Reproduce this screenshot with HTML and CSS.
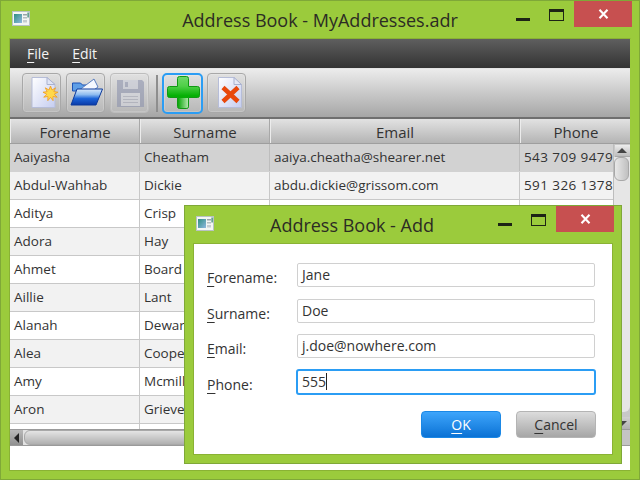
FILE: index.html
```html
<!DOCTYPE html>
<html lang="en">
<head>
<meta charset="utf-8">
<title>Address Book</title>
<link rel="stylesheet" href="styles.css">
</head>
<body>
<svg class="defs" width="0" height="0">
  <defs>
    <linearGradient id="winTile" x1="0" y1="0" x2="1" y2="1"><stop offset="0" stop-color="#2f8f80"/><stop offset="1" stop-color="#8fb8e0"/></linearGradient>
    <linearGradient id="pageG" x1="0" y1="0" x2="1" y2="1"><stop offset="0" stop-color="#ffffff"/><stop offset="1" stop-color="#c5cdf0"/></linearGradient>
    <linearGradient id="folderG" x1="0" y1="0" x2="0" y2="1"><stop offset="0" stop-color="#dcebfb"/><stop offset="0.35" stop-color="#8dbcf0"/><stop offset="0.6" stop-color="#1a63d8"/><stop offset="1" stop-color="#0a3aa8"/></linearGradient>
    <linearGradient id="plusG" x1="0" y1="0" x2="0" y2="1"><stop offset="0" stop-color="#6fd86a"/><stop offset="0.3" stop-color="#4fcf48"/><stop offset="0.6" stop-color="#05b005"/><stop offset="1" stop-color="#109a10"/></linearGradient>
    <linearGradient id="plusShine" x1="0" y1="0" x2="1" y2="0"><stop offset="0" stop-color="#0aa80a"/><stop offset="1" stop-color="#d8f5d0"/></linearGradient>
    <symbol id="winicon" viewBox="0 0 18 15">
      <rect x="0.5" y="0.5" width="17" height="14" fill="#f3f6f4" stroke="#b9c2c4"/>
      <rect x="2" y="3" width="8" height="9" fill="url(#winTile)"/>
      <rect x="11" y="3" width="4" height="1.5" fill="#9aa5aa"/>
      <rect x="11" y="6" width="4" height="1.5" fill="#b5bdc0"/>
      <rect x="11" y="9" width="4" height="2.5" fill="#c5ccd0"/>
      <rect x="15.5" y="1.5" width="1.2" height="5" fill="#2c7f6a"/>
    </symbol>
  </defs>
</svg>

<section class="window main-window">
  <header class="titlebar">
    <svg class="app-icon"><use href="#winicon"/></svg>
    <h1 class="title">Address Book - MyAddresses.adr</h1>
    <div class="win-controls">
      <span class="min"></span>
      <span class="max"></span>
      <span class="close"><svg width="11" height="10" viewBox="0 0 11 10"><path d="M1.500 .8 9.500 9.200 M9.500 .8 1.500 9.200" stroke="#fff" stroke-width="2.100" fill="none"/></svg></span>
    </div>
  </header>
  <div class="client">
    <nav class="menubar">
      <span class="menu"><u>F</u>ile</span>
      <span class="menu"><u>E</u>dit</span>
    </nav>
    <div class="toolbar">
      <button class="tool" type="button">
        <svg width="34" height="34" viewBox="0 0 34 34">
          <path d="M7 1.500H22L30 8.500V31.500H7Z" fill="url(#pageG)" stroke="#b6bdd8"/>
          <path d="M22 1.500V8.500H30Z" fill="#dfe4f5" stroke="#aab2cf"/>
          <path d="M25.500 10l1.500 4 3.500-2.200-1.700 3.800 4.100.6-3.700 2 3 3-4.200-.7.100 4.200-2.600-3.300-2.700 3.300.100-4.200-4.200.7 3-3-3.700-2 4.100-.6-1.800-3.800 3.600 2.200Z" fill="#ffd84a" stroke="#f09a20" stroke-width=".8"/>
        </svg>
      </button>
      <button class="tool" type="button">
        <svg width="34" height="34" viewBox="0 0 34 34">
          <path d="M3.500 7h8l2 2h8v6H3.500Z" fill="#5f9fe6" stroke="#1c52b5"/>
          <path d="M9 15 25 3l4 8-7 5Z" fill="#f5f8ff" stroke="#5b7fc0"/>
          <path d="M8 13h25.500l-6.500 16H2Z" fill="url(#folderG)" stroke="#0d3a9c"/>
        </svg>
      </button>
      <button class="tool tool-disabled" type="button">
        <svg width="34" height="34" viewBox="0 0 34 34">
          <path d="M4 4h25l2 2v25H4Z" fill="#8d93ad"/>
          <rect x="10" y="4" width="15" height="9" fill="#c9ccd8"/>
          <rect x="12" y="6" width="3" height="5" fill="#8d93ad"/>
          <rect x="8" y="17" width="19" height="13" fill="#d6d8e0"/>
          <path d="M10 20.500h15M10 23.500h15M10 26.500h15" stroke="#a8abba"/>
        </svg>
      </button>
      <span class="tool-sep"></span>
      <button class="tool tool-focus" type="button">
        <svg width="34" height="34" viewBox="0 0 34 34">
          <path d="M13.500 .5h7a2 2 0 0 1 2 2v8h9a2 2 0 0 1 2 2v7a2 2 0 0 1-2 2h-9v9a2 2 0 0 1-2 2h-7a2 2 0 0 1-2-2v-9h-8a2 2 0 0 1-2-2v-7a2 2 0 0 1 2-2h8v-8a2 2 0 0 1 2-2Z" fill="url(#plusG)" stroke="#0f9a12"/>
          <path d="M12 22h10v8.500a1.500 1.500 0 0 1-1.500 1.500h-7a1.500 1.500 0 0 1-1.500-1.500Z" fill="url(#plusShine)" opacity=".8"/>
        </svg>
      </button>
      <button class="tool" type="button">
        <svg width="34" height="34" viewBox="0 0 34 34">
          <path d="M8.500 1.500H24L31.500 8.500V31.500H8.500Z" fill="url(#pageG)" stroke="#b6bdd8"/>
          <path d="M24 1.500V8.500H31.500Z" fill="#e5e8f5" stroke="#aab2cf"/>
          <path d="M13 11.500 28 25.500M28 11.500 13 25.500" stroke="#e8480c" stroke-width="4.500" fill="none"/>
        </svg>
      </button>
    </div>
    <div class="table">
      <div class="thead">
        <div class="th col-a">Forename</div>
        <div class="th col-b">Surname</div>
        <div class="th col-c">Email</div>
        <div class="th col-d">Phone</div>
      </div>
      <div class="tbody">
        <div class="rows">
          <div class="row row-selected"><div class="td col-a">Aaiyasha</div><div class="td col-b">Cheatham</div><div class="td col-c">aaiya.cheatha@shearer.net</div><div class="td col-d">543 709 9479</div></div>
          <div class="row row-odd"><div class="td col-a">Abdul-Wahhab</div><div class="td col-b">Dickie</div><div class="td col-c">abdu.dickie@grissom.com</div><div class="td col-d">591 326 1378</div></div>
          <div class="row"><div class="td col-a">Aditya</div><div class="td col-b">Crisp</div><div class="td col-c"></div><div class="td col-d"></div></div>
          <div class="row row-odd"><div class="td col-a">Adora</div><div class="td col-b">Hay</div><div class="td col-c"></div><div class="td col-d"></div></div>
          <div class="row"><div class="td col-a">Ahmet</div><div class="td col-b">Board</div><div class="td col-c"></div><div class="td col-d"></div></div>
          <div class="row row-odd"><div class="td col-a">Aillie</div><div class="td col-b">Lant</div><div class="td col-c"></div><div class="td col-d"></div></div>
          <div class="row"><div class="td col-a">Alanah</div><div class="td col-b">Dewar</div><div class="td col-c"></div><div class="td col-d"></div></div>
          <div class="row row-odd"><div class="td col-a">Alea</div><div class="td col-b">Cooper</div><div class="td col-c"></div><div class="td col-d"></div></div>
          <div class="row"><div class="td col-a">Amy</div><div class="td col-b">Mcmillan</div><div class="td col-c"></div><div class="td col-d"></div></div>
          <div class="row row-odd"><div class="td col-a">Aron</div><div class="td col-b">Grieve</div><div class="td col-c"></div><div class="td col-d"></div></div>
          <div class="row row-last"><div class="td col-a"></div><div class="td col-b"></div><div class="td col-c"></div><div class="td col-d"></div></div>
        </div>
        <div class="vscroll">
          <span class="arrow-box"><span class="arrow-up"></span></span>
          <span class="vtrack"><span class="vthumb"></span></span>
          <span class="arrow-box arrow-box-down"><span class="arrow-down"></span></span>
        </div>
      </div>
      <div class="hscroll">
        <span class="arrow-box-h"><span class="arrow-left"></span></span>
        <span class="hthumb"></span>
        <span class="scroll-corner"></span>
      </div>
    </div>
  </div>
</section>

<section class="window dialog">
  <header class="titlebar dialog-titlebar">
    <svg class="app-icon"><use href="#winicon"/></svg>
    <h2 class="title dialog-title">Address Book - Add</h2>
    <div class="win-controls dialog-controls">
      <span class="min"></span>
      <span class="max"></span>
      <span class="close"><svg width="11" height="10" viewBox="0 0 11 10"><path d="M1.500 .8 9.500 9.200 M9.500 .8 1.500 9.200" stroke="#fff" stroke-width="2.100" fill="none"/></svg></span>
    </div>
  </header>
  <form class="dialog-client">
    <div class="form-grid">
      <label class="form-label"><u>F</u>orename:</label><div class="input">Jane</div>
      <label class="form-label"><u>S</u>urname:</label><div class="input">Doe</div>
      <label class="form-label"><u>E</u>mail:</label><div class="input">j.doe@nowhere.com</div>
      <label class="form-label"><u>P</u>hone:</label><div class="input input-focus">555<span class="caret"></span></div>
    </div>
    <div class="actions">
      <span class="btn btn-default"><u>O</u>K</span>
      <span class="btn btn-cancel"><u>C</u>ancel</span>
    </div>
  </form>
</section>
</body>
</html>
```

FILE: styles.css
```css
* { box-sizing: border-box; }
html, body { margin: 0; padding: 0; }
body {
  width: 640px;
  height: 480px;
  position: relative;
  overflow: hidden;
  background: #9bcb3c;
  font-family: "Open Sans", "Noto Sans", sans-serif;
  font-size: 14px;
  color: #333;
}
u { text-underline-offset: 3px; }
.defs { position: absolute; }
.window {
  position: absolute;
  display: flex;
  flex-direction: column;
  background: #9bcb3c;
  border: 1px solid #7fa838;
}
.main-window { left: 0; top: 0; width: 640px; height: 480px; padding: 0 8px 8px; }
.titlebar {
  height: 37px;
  flex: none;
  position: relative;
  display: flex;
  justify-content: center;
}
.app-icon { position: absolute; left: 3px; top: 10px; width: 18px; height: 15px; }
.title {
  margin: 0;
  font-weight: 400;
  font-size: 18px;
  line-height: 38px;
  color: #2c2c24;
}
.win-controls {
  position: absolute;
  right: -1px;
  top: 0;
  height: 26px;
  display: flex;
  align-items: flex-start;
}
.min { width: 14px; height: 3px; margin-top: 17px; margin-right: 19px; background: #1d2415; }
.max { width: 15px; height: 12px; margin-top: 8px; margin-right: 10px; border: 1px solid #1d2415; border-top-width: 3px; }
.close {
  width: 58px;
  height: 26px;
  background: #c75050;
  display: flex;
  align-items: center;
  justify-content: center;
  padding-bottom: 1px;
}
.client {
  flex: 1;
  display: flex;
  flex-direction: column;
  background: #fff;
  border: 1px solid #8ab234;
  border-right-color: #9bcb3c;
  min-height: 0;
}
.menubar {
  height: 30px;
  flex: none;
  display: flex;
  gap: 23px;
  padding: 0 17px;
  align-items: center;
  background: linear-gradient(#5f5f5f, #333);
  border-bottom: 1px solid #e4e4e4;
  color: #f4f4f4;
}
.menu { line-height: 28px; }
.toolbar {
  height: 50px;
  flex: none;
  display: flex;
  align-items: center;
  gap: 5px;
  padding: 0 12px;
  background: linear-gradient(#ececec, #a6a6a6);
  border-bottom: 2px solid #6f6f6f;
}
.tool {
  width: 39px;
  height: 40px;
  padding: 0;
  flex: none;
  display: flex;
  align-items: center;
  justify-content: center;
  border: 1px solid #a8a8a8;
  border-radius: 4px;
  background: linear-gradient(#e0e0e0, #b8b8b8);
  box-shadow: inset 0 0 0 1px rgba(255, 255, 255, .18);
}
.tool svg { flex: none; }
.tool-disabled { border-color: #bdbdbd; }
.tool-disabled svg { opacity: .6; }
.tool-focus {
  width: 41px;
  height: 41px;
  margin: 0 -1px;
  border: 2px solid #2b9df4;
  border-radius: 5px;
}
.tool-sep { width: 2px; height: 37px; background: #8e8e8e; margin-left: 2px; }
.table {
  flex: none;
  width: 100%;
  display: flex;
  flex-direction: column;
  height: 327px;
  overflow: hidden;
}
.thead {
  height: 25px;
  flex: none;
  display: flex;
  background: linear-gradient(#e2e2e2, #b4b4b4);
  border-bottom: 1px solid #9e9e9e;
}
.th {
  text-align: center;
  line-height: 26px;
  font-size: 15px;
  border-right: 1px solid #a8a8a8;
  border-left: 1px solid #ececec;
  color: #333;
}
.col-a { width: 130px; flex: none; }
.col-b { width: 130px; flex: none; }
.col-c { width: 250px; flex: none; }
.col-d { width: 112px; flex: none; }
.tbody { flex: 1; position: relative; display: flex; min-height: 0; overflow: hidden; }
.rows { flex: 1; overflow: hidden; }
.row { display: flex; height: 28px; background: #fff; border-bottom: 1px solid #c8c8c8; }
.row-odd { background: #f2f2f2; }
.row-selected { background: #d2d2d2; border-bottom-color: #d2d2d2; }
.td {
  padding-left: 4px;
  line-height: 27px;
  font-size: 13.5px;
  white-space: nowrap;
  overflow: hidden;
  border-right: 1px solid #c8c8c8;
}
.td.col-d { letter-spacing: .4px; }
.row-selected .td { border-right-color: #bdbdbd; }
.vscroll {
  position: absolute;
  right: 0;
  top: 0;
  bottom: 0;
  width: 17px;
  background: #c8c8c8;
  border-left: 1px solid #bdbdbd;
  display: flex;
  flex-direction: column;
  align-items: center;
  padding-top: 1px;
}
.arrow-box { width: 15px; height: 12px; flex: none; display: flex; align-items: center; justify-content: center; background: linear-gradient(#ececec, #bcbcbc); border-bottom: 1px solid #a8a8a8; }
.arrow-box-down { background: linear-gradient(#d0d0d0, #b0b0b0); border-bottom: 0; }
.arrow-up { width: 0; height: 0; border: 5px solid transparent; border-top: 0; border-bottom: 5px solid #444; }
.arrow-down { width: 0; height: 0; border: 5px solid transparent; border-bottom: 0; border-top: 5px solid #444; }
.vtrack { flex: 1; width: 100%; margin-bottom: 5px; background: #e6e6e6; border-radius: 0 0 6px 6px; }
.vthumb { display: block; width: 15px; height: 24px; border: 1px solid #a8a8a8; border-radius: 6px; background: linear-gradient(90deg, #e8e8e8, #c0c0c0); }
.hscroll {
  height: 17px;
  flex: none;
  display: flex;
  align-items: center;
  background: #e2e2e2;
  border-top: 1px solid #9a9a9a;
  border-bottom: 1px solid #9a9a9a;
}
.arrow-box-h { width: 13px; height: 15px; flex: none; display: flex; align-items: center; justify-content: center; background: linear-gradient(#b8b8b8, #909090); }
.arrow-left { width: 0; height: 0; border: 5px solid transparent; border-left: 0; border-right: 5px solid #222; }
.hthumb { flex: 1; height: 15px; margin-left: 1px; border: 1px solid #a8a8a8; border-radius: 6px; background: linear-gradient(#e4e4e4, #b0b0b0); }
.scroll-corner { width: 17px; height: 15px; flex: none; background: #c4c4c4; }

.dialog { left: 184px; top: 205px; width: 438px; height: 259px; padding: 0 8px 8px; }
.dialog-title { padding-right: 102px; }
.dialog-client {
  flex: 1;
  background: #fff;
  border: 1px solid #8ab234;
  padding: 19px 17px 0 13px;
  display: flex;
  flex-direction: column;
}
.form-grid {
  display: grid;
  grid-template-columns: 90px 1fr;
  row-gap: 11.67px;
}
.form-label { line-height: 24px; padding-top: 3px; font-size: 14px; color: #333; height: 24px; }
.input {
  height: 24px;
  line-height: 22px;
  padding-left: 4px;
  border: 1px solid #d0d0d0;
  border-radius: 2px;
  background: #fff;
  font-size: 14px;
}
.input-focus { height: 26px; margin: -1px; border: 2px solid #2b9df4; border-radius: 3px; padding-left: 4px; }
.caret { display: inline-block; width: 1px; height: 17px; background: #222; vertical-align: -3px; }
.actions { display: flex; justify-content: flex-end; gap: 15px; margin: 17px -1px 0 0; }
.btn {
  width: 80px;
  height: 27px;
  line-height: 26px;
  text-align: center;
  border-radius: 4px;
  font-size: 14px;
}
.btn-default { color: #fff; background: linear-gradient(#3ea5fb, #0b72d5); border: 1px solid #1b88e6; }
.btn-cancel { color: #333; background: linear-gradient(#dcdcdc, #a6a6a6); border: 1px solid #b4b4b4; }
```
